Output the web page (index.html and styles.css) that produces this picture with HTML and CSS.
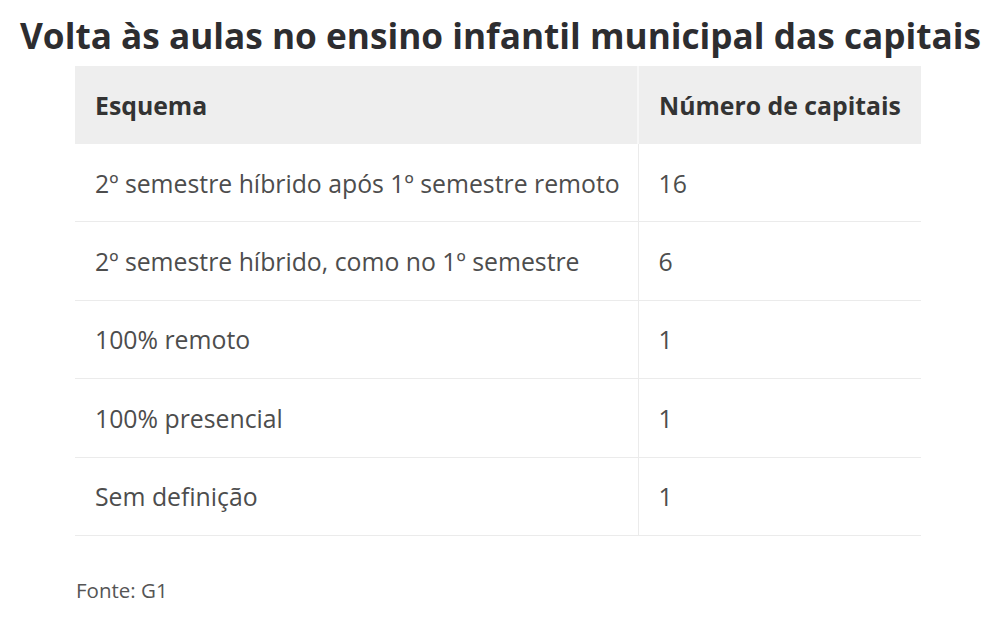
FILE: index.html
```html
<!DOCTYPE html>
<html lang="pt-BR">
<head>
<meta charset="utf-8">
<title>Volta às aulas no ensino infantil municipal das capitais</title>
<link rel="stylesheet" href="styles.css">
</head>
<body>
<div class="page">
  <h1 class="title">Volta às aulas no ensino infantil municipal das capitais</h1>
  <table class="data">
    <colgroup><col class="col1"><col class="col2"></colgroup>
    <thead>
      <tr><th class="c1">Esquema</th><th class="c2">Número de capitais</th></tr>
    </thead>
    <tbody>
      <tr><td class="c1">2º semestre híbrido após 1º semestre remoto</td><td class="c2">16</td></tr>
      <tr><td class="c1">2º semestre híbrido, como no 1º semestre</td><td class="c2">6</td></tr>
      <tr><td class="c1">100% remoto</td><td class="c2">1</td></tr>
      <tr><td class="c1">100% presencial</td><td class="c2">1</td></tr>
      <tr><td class="c1">Sem definição</td><td class="c2">1</td></tr>
    </tbody>
  </table>
  <p class="source">Fonte: G1</p>
</div>
</body>
</html>
```
FILE: styles.css
```css
html, body {
  margin: 0;
  padding: 0;
  background: #ffffff;
}
.page {
  width: 1000px;
  height: 637px;
  overflow: hidden;
  font-family: "Open Sans", "Liberation Sans", sans-serif;
  color: #333333;
}
.title {
  margin: 0;
  padding: 12px 0 0 20px;
  font-size: 35.2px;
  font-weight: 700;
  line-height: 46px;
  color: #2d2d30;
  white-space: nowrap;
}
.data {
  margin: 8px 0 0 75px;
  width: 846px;
  border-collapse: collapse;
  table-layout: fixed;
}
.col1 {
  width: 563px;
}
.col2 {
  width: 283px;
}
.data th,
.data td {
  padding: 0 0 0 20px;
  white-space: nowrap;
  text-align: left;
  font-size: 24.8px;
}
.data th {
  background: #eeeeee;
  height: 78px;
  font-weight: 700;
  color: #333333;
}
.data th.c1 {
  border-right: 2px solid #f7f7f7;
}
.data td {
  height: 77.4px;
  font-weight: 400;
  color: #4d4d4d;
  border-bottom: 1px solid #ebebeb;
}
.data td.c1 {
  border-right: 1px solid #ebebeb;
}
.source {
  margin: 40px 0 0 76px;
  font-size: 20.5px;
  color: #555555;
}
```
